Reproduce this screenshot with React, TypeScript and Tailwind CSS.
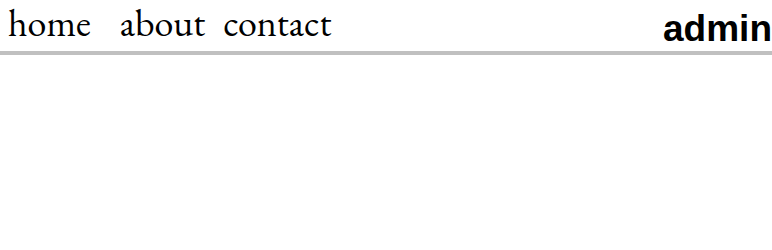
export default function App() {
  return (
    <div className="min-h-[250px] bg-white">
      <nav className="flex h-[55px] items-start justify-between border-b-4 border-[#c0c0c0]">
        <div className="flex items-baseline pl-2 font-['EB_Garamond','Liberation_Serif',serif] text-[38px] leading-[46px] text-black">
          <a href="#" className="mr-[29px]">home</a>
          <a href="#" className="mr-[18px]">about</a>
          <a href="#">contact</a>
        </div>
        <div className="pt-[8px] font-['Liberation_Sans',Arial,sans-serif] text-[37px] font-bold leading-[42px] text-black">
          admin
        </div>
      </nav>
    </div>
  );
}
